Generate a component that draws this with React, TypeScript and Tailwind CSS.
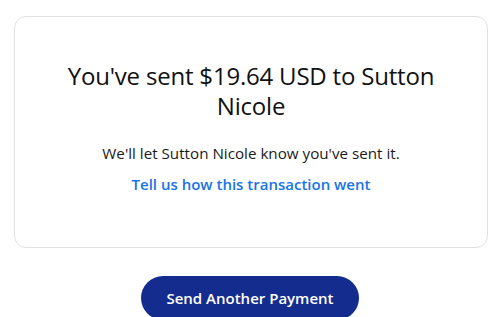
export default function App() {
  return (
    <div className="w-[500px] h-[317px] overflow-hidden bg-white" style={{ fontFamily: '"Open Sans", "Liberation Sans", sans-serif' }}>
      <div className="pt-4 px-[14px]">
        <div className="w-[474px] h-[232px] border border-[#e2e2e0] rounded-xl flex flex-col items-center pt-[44px] px-10">
          <h1 className="text-[24px] leading-[30px] text-[#111] text-center tracking-[-0.2px]">You've sent $19.64 USD to Sutton Nicole</h1>
          <p className="mt-[21px] text-[15.2px] leading-[22px] text-[#1a1a1a]">We'll let Sutton Nicole know you've sent it.</p>
          <a className="mt-[9px] text-[15px] leading-[22px] font-semibold text-[#1a73e8]">Tell us how this transaction went</a>
        </div>
      </div>
      <div className="flex justify-center mt-[28px]">
        <button className="w-[218px] h-[44px] rounded-full bg-[#142c8e] text-white text-[15px] font-semibold">Send Another Payment</button>
      </div>
    </div>
  );
}
